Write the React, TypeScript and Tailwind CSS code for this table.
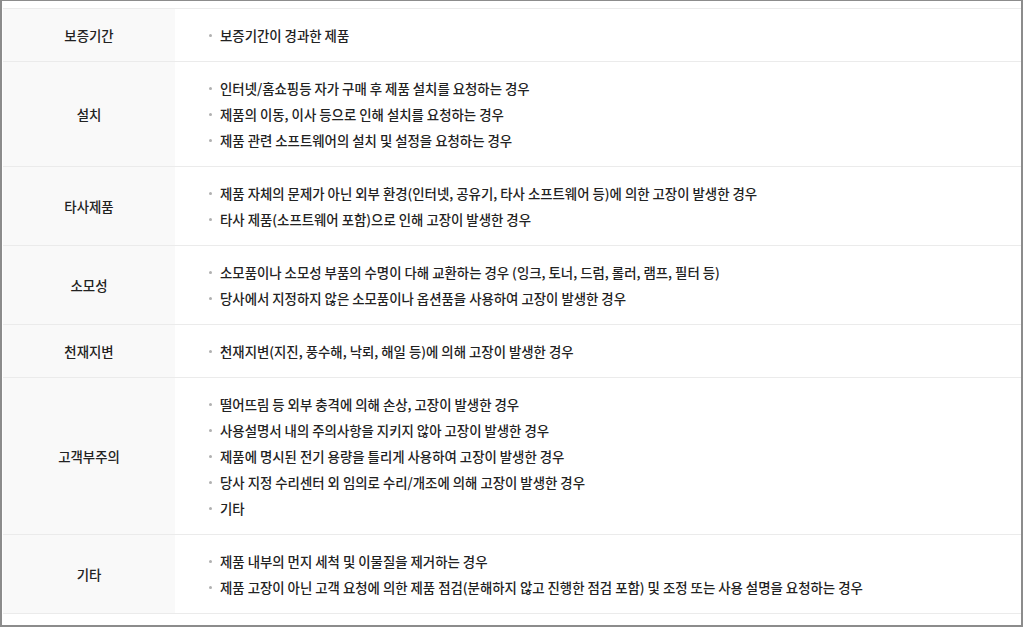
const rows: { label: string; items: string[] }[] = [
  { label: "보증기간", items: ["보증기간이 경과한 제품"] },
  {
    label: "설치",
    items: [
      "인터넷/홈쇼핑등 자가 구매 후 제품 설치를 요청하는 경우",
      "제품의 이동, 이사 등으로 인해 설치를 요청하는 경우",
      "제품 관련 소프트웨어의 설치 및 설정을 요청하는 경우",
    ],
  },
  {
    label: "타사제품",
    items: [
      "제품 자체의 문제가 아닌 외부 환경(인터넷, 공유기, 타사 소프트웨어 등)에 의한 고장이 발생한 경우",
      "타사 제품(소프트웨어 포함)으로 인해 고장이 발생한 경우",
    ],
  },
  {
    label: "소모성",
    items: [
      "소모품이나 소모성 부품의 수명이 다해 교환하는 경우 (잉크, 토너, 드럼, 롤러, 램프, 필터 등)",
      "당사에서 지정하지 않은 소모품이나 옵션품을 사용하여 고장이 발생한 경우",
    ],
  },
  { label: "천재지변", items: ["천재지변(지진, 풍수해, 낙뢰, 해일 등)에 의해 고장이 발생한 경우"] },
  {
    label: "고객부주의",
    items: [
      "떨어뜨림 등 외부 충격에 의해 손상, 고장이 발생한 경우",
      "사용설명서 내의 주의사항을 지키지 않아 고장이 발생한 경우",
      "제품에 명시된 전기 용량을 틀리게 사용하여 고장이 발생한 경우",
      "당사 지정 수리센터 외 임의로 수리/개조에 의해 고장이 발생한 경우",
      "기타",
    ],
  },
  {
    label: "기타",
    items: [
      "제품 내부의 먼지 세척 및 이물질을 제거하는 경우",
      "제품 고장이 아닌 고객 요청에 의한 제품 점검(분해하지 않고 진행한 점검 포함) 및 조정 또는 사용 설명을 요청하는 경우",
    ],
  },
];

export default function App() {
  return (
    <div
      className="h-[627px] w-[1023px] border-t border-r-2 border-b-2 border-l-2 border-[#8c8c8c] bg-white pt-[7px] pl-px text-[13.4px] font-medium text-[#222]"
      style={{ fontFamily: '"Noto Sans CJK KR", "Noto Sans", sans-serif' }}
    >
      <div className="border-t border-[#ebebeb]">
        {rows.map((row) => (
          <div key={row.label} className="flex border-b border-[#ebebeb]">
            <div className="flex w-[172px] shrink-0 items-center justify-center bg-[#f9f9f9]">
              {row.label}
            </div>
            <ul className="flex flex-col py-[13px] pl-[34px]">
              {row.items.map((item) => (
                <li key={item} className="flex h-[26px] items-center">
                  <span className="mr-[8px] h-[3px] w-[3px] shrink-0 rounded-full bg-[#b0b0b0]" />
                  {item}
                </li>
              ))}
            </ul>
          </div>
        ))}
      </div>
    </div>
  );
}
